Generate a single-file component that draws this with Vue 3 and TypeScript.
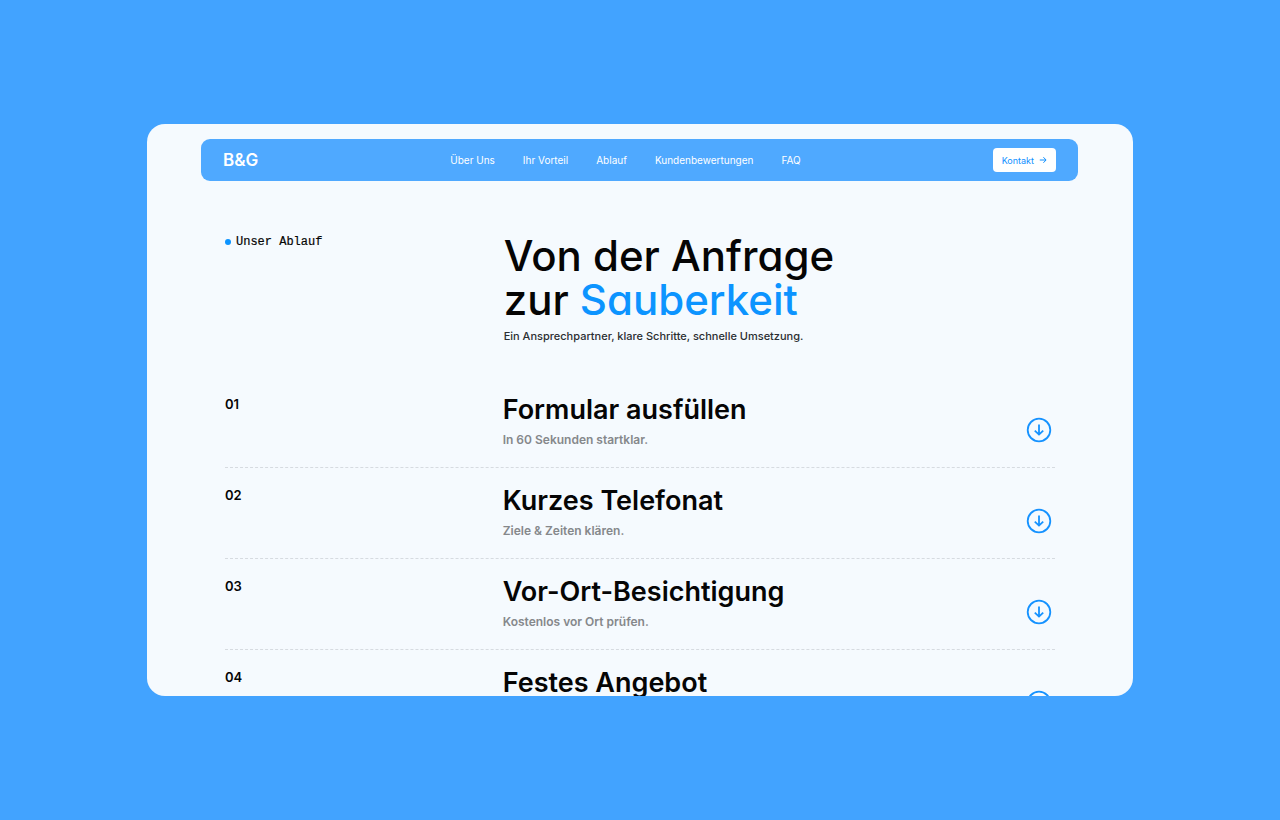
<script setup lang="ts">
interface Link {
  label: string
  href: string
}

interface Step {
  no: string
  title: string
  text: string
}

const links: Link[] = [
  { label: 'Über Uns', href: '#ueber-uns' },
  { label: 'Ihr Vorteil', href: '#vorteil' },
  { label: 'Ablauf', href: '#ablauf' },
  { label: 'Kundenbewertungen', href: '#bewertungen' },
  { label: 'FAQ', href: '#faq' },
]

const steps: Step[] = [
  { no: '01', title: 'Formular ausfüllen', text: 'In 60 Sekunden startklar.' },
  { no: '02', title: 'Kurzes Telefonat', text: 'Ziele & Zeiten klären.' },
  { no: '03', title: 'Vor-Ort-Besichtigung', text: 'Kostenlos vor Ort prüfen.' },
  { no: '04', title: 'Festes Angebot', text: '' },
]
</script>

<template>
  <div class="stage">
    <div class="card">
      <header class="nav">
        <a class="logo" href="#start">B&amp;G</a>
        <nav class="links">
          <a v-for="link in links" :key="link.href" :href="link.href">{{ link.label }}</a>
        </nav>
        <a class="contact" href="#kontakt">
          Kontakt
          <svg width="8" height="8" viewBox="0 0 8 8" aria-hidden="true">
            <path d="M0.8 4H7M4.4 1.2L7.1 4L4.4 6.8" />
          </svg>
        </a>
      </header>

      <main id="ablauf" class="content">
        <section class="intro">
          <p class="tag"><span class="dot"></span>Unser Ablauf</p>
          <div class="headline">
            <h1>Von der Anfrage<br />zur <em>Sauberkeit</em></h1>
            <p>Ein Ansprechpartner, klare Schritte, schnelle Umsetzung.</p>
          </div>
        </section>

        <ol class="steps">
          <li v-for="step in steps" :key="step.no" class="step">
            <span class="no">{{ step.no }}</span>
            <div class="body">
              <h2>{{ step.title }}</h2>
              <p v-if="step.text">{{ step.text }}</p>
            </div>
            <button class="toggle" type="button" :aria-label="step.title + ' öffnen'">
              <svg width="26" height="26" viewBox="0 0 26 26" aria-hidden="true">
                <circle cx="13" cy="13" r="11.3" />
                <path d="M13 7.6V17.4M8.8 13.6L13 17.6L17.2 13.6" />
              </svg>
            </button>
          </li>
        </ol>
      </main>
    </div>
  </div>
</template>

<style>
body {
  margin: 0;
  background: #42a3ff;
}
</style>

<style scoped>
.stage {
  box-sizing: border-box;
  height: 100vh;
  padding: 124px 147px;
  background: #42a3ff;
  font-family: Inter, 'Liberation Sans', sans-serif;
  color: #050505;
}

.card {
  box-sizing: border-box;
  height: 100%;
  padding: 15px 55px 0 54px;
  overflow: hidden;
  border-radius: 18px;
  background: #f5fafe;
}

.nav {
  display: flex;
  justify-content: space-between;
  align-items: center;
  height: 42px;
  padding: 0 22px;
  border-radius: 9px;
  background: #4fa9ff;
}

.nav a {
  text-decoration: none;
}

.logo {
  font-size: 17px;
  font-weight: 600;
  color: #fff;
}

.links {
  display: flex;
  gap: 28px;
  font-size: 10px;
}

.links a {
  color: #fff;
}

.contact {
  display: flex;
  align-items: center;
  gap: 5px;
  height: 24px;
  padding: 0 9px;
  border-radius: 4px;
  background: #fff;
  font-size: 9px;
  color: #1090ff;
}

.contact svg {
  fill: none;
  stroke: currentColor;
  stroke-width: 1;
}

.content {
  padding: 0 23px 0 24px;
}

.intro,
.step {
  display: grid;
  grid-template-columns: 1fr 2fr;
}

.intro {
  padding-top: 53px;
}

.tag {
  display: flex;
  align-items: center;
  align-self: start;
  gap: 5px;
  margin: 0;
  font-family: 'Liberation Mono', monospace;
  font-size: 12px;
  line-height: 16px;
  -webkit-text-stroke: 0.2px;
}

.dot {
  width: 6px;
  height: 6px;
  border-radius: 50%;
  background: #0c94ff;
}

.headline {
  padding-left: 2px;
}

.headline h1 {
  margin: 0;
  font-size: 42px;
  font-weight: 500;
  line-height: 44px;
  font-feature-settings: 'cv11';
}

.headline em {
  font-style: normal;
  color: #0c94ff;
}

.headline p {
  margin: 6px 0 0;
  font-size: 11px;
  font-weight: 500;
  line-height: 16px;
  color: #2b2e31;
}

.steps {
  margin: 33px 0 0;
  padding: 0;
  list-style: none;
}

.step {
  grid-template-columns: 1fr calc(200% / 3 - 30px) 29px;
  height: 90px;
  border-bottom: 1px dashed #d6dbe0;
}

.no {
  padding-top: 18px;
  font-size: 13px;
  font-weight: 600;
  line-height: 18px;
}

.body h2 {
  margin: 16px 0 0;
  font-size: 27px;
  font-weight: 600;
  line-height: 34px;
}

.body p {
  margin: 4px 0 0;
  font-size: 12px;
  font-weight: 600;
  line-height: 18px;
  color: #85888b;
}

.toggle {
  align-self: start;
  width: 26px;
  height: 26px;
  margin-top: 40px;
  padding: 0;
  border: 0;
  background: none;
}

.toggle svg {
  display: block;
  fill: none;
  stroke: #1592ff;
  stroke-width: 1.8;
}
</style>
